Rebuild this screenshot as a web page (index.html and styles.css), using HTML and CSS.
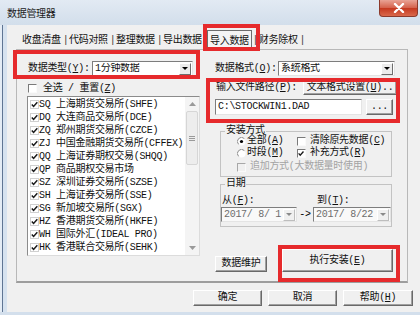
FILE: index.html
```html
<!DOCTYPE html>
<html lang="zh-CN">
<head>
<meta charset="utf-8">
<title>数据管理器</title>
<link rel="stylesheet" href="styles.css">
</head>
<body>
<div class="window">
  <div class="titlebar">
    <span class="title">数据管理器</span>
    <span class="close"><svg width="12" height="10" viewBox="0 0 12 10"><path d="M2 1 L10 9 M10 1 L2 9" stroke="#fff" stroke-width="2.4" stroke-linecap="round"/></svg></span>
  </div>
  <div class="frame-body">
    <div class="edge"></div>
    <div class="client">
      <div class="tabs">
        <span class="tab">收盘清盘</span><span class="sep">|</span>
        <span class="tab">代码对照</span><span class="sep">|</span>
        <span class="tab">整理数据</span><span class="sep">|</span>
        <span class="tab">导出数据</span><span class="sep">|</span>
        <span class="tab sel">导入数据</span><span class="sep">|</span>
        <span class="tab">财务除权</span><span class="sep">|</span>
      </div>
      <div class="page">
        <div class="col-left">
          <div class="row r-type">
            <span class="lbl lbl-type">数据类型(<u>Y</u>):</span>
            <div class="combo combo-type"><span class="val">1分钟数据</span><span class="drop"><i class="tri"></i></span></div>
          </div>
          <div class="row r-all">
            <span class="chk3d"></span><span class="all-text">全选 / 重置(<u>Z</u>)</span>
          </div>
          <div class="list">
            <div class="items">
              <div class="item"><svg class="tick" viewBox="0 0 9 9"><rect x="0.5" y="0.5" width="8" height="8" fill="#fff" stroke="#d0d0d0"/><path d="M1.8 4.4 L3.6 6.4 L7.3 2.2" fill="none" stroke="#1a1a1a" stroke-width="1.5"/></svg><span class="txt">SQ 上海期货交易所(SHFE)</span></div>
              <div class="item"><svg class="tick" viewBox="0 0 9 9"><rect x="0.5" y="0.5" width="8" height="8" fill="#fff" stroke="#d0d0d0"/><path d="M1.8 4.4 L3.6 6.4 L7.3 2.2" fill="none" stroke="#1a1a1a" stroke-width="1.5"/></svg><span class="txt">DQ 大连商品交易所(DCE)</span></div>
              <div class="item"><svg class="tick" viewBox="0 0 9 9"><rect x="0.5" y="0.5" width="8" height="8" fill="#fff" stroke="#d0d0d0"/><path d="M1.8 4.4 L3.6 6.4 L7.3 2.2" fill="none" stroke="#1a1a1a" stroke-width="1.5"/></svg><span class="txt">ZQ 郑州期货交易所(CZCE)</span></div>
              <div class="item"><svg class="tick" viewBox="0 0 9 9"><rect x="0.5" y="0.5" width="8" height="8" fill="#fff" stroke="#d0d0d0"/><path d="M1.8 4.4 L3.6 6.4 L7.3 2.2" fill="none" stroke="#1a1a1a" stroke-width="1.5"/></svg><span class="txt">ZJ 中国金融期货交易所(CFFEX)</span></div>
              <div class="item"><svg class="tick" viewBox="0 0 9 9"><rect x="0.5" y="0.5" width="8" height="8" fill="#fff" stroke="#d0d0d0"/><path d="M1.8 4.4 L3.6 6.4 L7.3 2.2" fill="none" stroke="#1a1a1a" stroke-width="1.5"/></svg><span class="txt">QQ 上海证券期权交易(SHQQ)</span></div>
              <div class="item"><svg class="tick" viewBox="0 0 9 9"><rect x="0.5" y="0.5" width="8" height="8" fill="#fff" stroke="#d0d0d0"/><path d="M1.8 4.4 L3.6 6.4 L7.3 2.2" fill="none" stroke="#1a1a1a" stroke-width="1.5"/></svg><span class="txt">QP 商品期权交易市场</span></div>
              <div class="item"><svg class="tick" viewBox="0 0 9 9"><rect x="0.5" y="0.5" width="8" height="8" fill="#fff" stroke="#d0d0d0"/><path d="M1.8 4.4 L3.6 6.4 L7.3 2.2" fill="none" stroke="#1a1a1a" stroke-width="1.5"/></svg><span class="txt">SZ 深圳证券交易所(SZSE)</span></div>
              <div class="item"><svg class="tick" viewBox="0 0 9 9"><rect x="0.5" y="0.5" width="8" height="8" fill="#fff" stroke="#d0d0d0"/><path d="M1.8 4.4 L3.6 6.4 L7.3 2.2" fill="none" stroke="#1a1a1a" stroke-width="1.5"/></svg><span class="txt">SH 上海证券交易所(SSE)</span></div>
              <div class="item"><svg class="tick" viewBox="0 0 9 9"><rect x="0.5" y="0.5" width="8" height="8" fill="#fff" stroke="#d0d0d0"/><path d="M1.8 4.4 L3.6 6.4 L7.3 2.2" fill="none" stroke="#1a1a1a" stroke-width="1.5"/></svg><span class="txt">SG 新加坡交易所(SGX)</span></div>
              <div class="item"><svg class="tick" viewBox="0 0 9 9"><rect x="0.5" y="0.5" width="8" height="8" fill="#fff" stroke="#d0d0d0"/><path d="M1.8 4.4 L3.6 6.4 L7.3 2.2" fill="none" stroke="#1a1a1a" stroke-width="1.5"/></svg><span class="txt">HZ 香港期货交易所(HKFE)</span></div>
              <div class="item"><svg class="tick" viewBox="0 0 9 9"><rect x="0.5" y="0.5" width="8" height="8" fill="#fff" stroke="#d0d0d0"/><path d="M1.8 4.4 L3.6 6.4 L7.3 2.2" fill="none" stroke="#1a1a1a" stroke-width="1.5"/></svg><span class="txt">WH 国际外汇(IDEAL PRO)</span></div>
              <div class="item"><svg class="tick" viewBox="0 0 9 9"><rect x="0.5" y="0.5" width="8" height="8" fill="#fff" stroke="#d0d0d0"/><path d="M1.8 4.4 L3.6 6.4 L7.3 2.2" fill="none" stroke="#1a1a1a" stroke-width="1.5"/></svg><span class="txt">HK 香港联合交易所(SEHK)</span></div>
            </div>
            <div class="vscroll">
              <div class="sb-btn"><svg width="7" height="4" viewBox="0 0 7 4"><path d="M0 4 L3.5 0 L7 4Z" fill="#9a9a9a"/></svg></div>
              <div class="sb-thumb"><svg width="6" height="5" viewBox="0 0 6 5"><path d="M0 0.5H6M0 2.5H6M0 4.5H6" stroke="#9a9a9a"/></svg></div>
              <div class="sb-track"></div>
              <div class="sb-btn"><svg width="7" height="4" viewBox="0 0 7 4"><path d="M0 0 L3.5 4 L7 0Z" fill="#9a9a9a"/></svg></div>
            </div>
          </div>
        </div>
        <div class="col-right">
          <div class="row r-fmt">
            <span class="lbl lbl-fmt">数据格式(<u>O</u>):</span>
            <div class="combo combo-fmt"><span class="val">系统格式</span><span class="drop"><i class="tri"></i></span></div>
          </div>
          <div class="row r-path">
            <span class="lbl">输入文件路径(<u>P</u>):</span>
            <span class="btn3d btn-txtfmt">文本格式设置(<u>U</u>)..</span>
          </div>
          <div class="row r-file">
            <span class="field">C:\STOCKWIN1.DAD</span>
            <span class="btn3d btn-dots">...</span>
          </div>
          <fieldset class="group g-install">
            <legend>安装方式</legend>
            <div class="grow">
              <span class="opt opt-a"><svg class="radio" viewBox="0 0 10 10"><circle cx="5" cy="5" r="4.5" fill="#fff"/><path d="M1.8 8.2 A4.5 4.5 0 0 1 8.2 1.8" fill="none" stroke="#808080" stroke-width="1"/><circle cx="5" cy="5" r="1.8" fill="#000"/></svg>全部(<u>A</u>)</span>
              <span class="opt"><span class="chk3d"></span>清除原先数据(<u>C</u>)</span>
            </div>
            <div class="grow">
              <span class="opt opt-a"><svg class="radio" viewBox="0 0 10 10"><circle cx="5" cy="5" r="4.5" fill="#fff"/><path d="M1.8 8.2 A4.5 4.5 0 0 1 8.2 1.8" fill="none" stroke="#808080" stroke-width="1"/></svg>时段(<u>M</u>)</span>
              <span class="opt"><span class="chk3d checked"><svg viewBox="0 0 9 9"><path d="M1.8 4.4 L3.6 6.4 L7.3 2.2" fill="none" stroke="#1a1a1a" stroke-width="1.5"/></svg></span>补充方式(<u>R</u>)</span>
            </div>
            <div class="grow g-last">
              <span class="opt disabled"><span class="chk3d dis"></span>追加方式(大数据量时使用)</span>
            </div>
          </fieldset>
          <fieldset class="group g-date">
            <legend>日期</legend>
            <div class="date-lbls"><span class="dl1">从(<u>F</u>):</span><span class="dl2">到(<u>T</u>):</span></div>
            <div class="date-row">
              <div class="combo dis combo-d1"><span class="val">2017/ 8/ 1</span><span class="drop"><i class="tri"></i></span></div>
              <span class="arrow">-&gt;</span>
              <div class="combo dis combo-d2"><span class="val">2017/ 8/22</span><span class="drop"><i class="tri"></i></span></div>
            </div>
          </fieldset>
          <div class="row r-actions">
            <span class="btn3d btn-maint">数据维护</span>
            <span class="btn3d btn-exec">执行安装(<u>E</u>)</span>
          </div>
        </div>
      </div>
      <div class="footer">
        <span class="btn3d fbtn">确定</span>
        <span class="btn3d fbtn">取消</span>
        <span class="btn3d fbtn">帮助(<u>H</u>)</span>
      </div>
    </div>
  </div>
  <div class="ann ann-tab"></div>
  <div class="ann ann-type"></div>
  <div class="ann ann-path"></div>
  <div class="ann ann-exec"></div>
</div>
</body>
</html>
```
FILE: styles.css
```css
html, body {
  margin: 0;
  padding: 0;
}
body {
  font-family: "Liberation Mono", "Noto Sans CJK SC", monospace;
  font-size: 10px;
  line-height: 12px;
  letter-spacing: -0.3px;
  color: #111;
  background: #fff;
}
u { text-decoration: underline; text-underline-offset: 1px; }

.window {
  position: relative;
  width: 420px;
  height: 315px;
  display: flex;
  flex-direction: column;
  background: #d3dfec;
  overflow: hidden;
}
.titlebar {
  height: 25px;
  display: flex;
  align-items: flex-start;
  background: linear-gradient(#e2eaf3, #d2deeb);
  flex: none;
}
.title {
  padding: 7px 0 0 7px;
  font-family: "Noto Sans CJK SC", sans-serif;
  color: #1b1b1b;
}
.close {
  margin-left: auto;
  margin-right: 2px;
  width: 39px;
  height: 17px;
  box-sizing: border-box;
  border: 1px solid #8c3a2c;
  border-top: none;
  border-radius: 0 0 4px 4px;
  background: linear-gradient(#e9a395, #d4604a 50%, #c5381f 51%, #d9694c);
  display: flex;
  align-items: center;
  justify-content: center;
}
.frame-body {
  flex: 1;
  display: flex;
  padding-bottom: 3px;
}
.edge {
  width: 7px;
  flex: none;
  background: linear-gradient(to right, #e4ecf5 0 2px, #5f7593 2px 3px, #d6e2ef 3px);
}
.client {
  flex: 1;
  background: #f0f0f0;
  display: flex;
  flex-direction: column;
}

/* tabs */
.tabs {
  height: 24px;
  display: flex;
  align-items: flex-end;
  padding-left: 15px;
  flex: none;
}
.tab {
  width: 40px;
  padding-bottom: 2px;
  white-space: nowrap;
}
.sep {
  width: 7px;
  text-align: center;
  padding-bottom: 2px;
  color: #3a3a3a;
}
.tab.sel {
  width: auto;
  margin-left: -3px;
  padding: 5px 2px 1px 2px;
  border: 1px solid #6d6d6d;
  border-bottom: none;
  background: #f4f4f4;
}

/* page */
.page {
  margin-left: 9px;
  width: 392px;
  height: 234px;
  box-sizing: border-box;
  border: 1px solid #b8b8b8;
  border-bottom: 2px solid #9d9d9d;
  display: grid;
  grid-template-columns: 188px 1fr;
  flex: none;
}
.row {
  display: flex;
  align-items: center;
}
.r-type {
  margin-top: 11px;
  height: 15px;
  padding-left: 11px;
}
.lbl-type { width: 64px; white-space: nowrap; }
.combo {
  display: flex;
  box-sizing: border-box;
  height: 15px;
  background: #fff;
  border-top: 1px solid #7d7d7d;
  border-left: 1px solid #7d7d7d;
  border-right: 1px solid #e4e4e4;
  border-bottom: 1px solid #e4e4e4;
  align-items: center;
}
.combo .val {
  flex: 1;
  padding-left: 2px;
  white-space: nowrap;
  overflow: hidden;
}
.combo .drop {
  width: 12px;
  height: 12px;
  margin-right: 1px;
  box-sizing: border-box;
  border-top: 1px solid #fff;
  border-left: 1px solid #fff;
  border-right: 1px solid #6e6e6e;
  border-bottom: 1px solid #6e6e6e;
  background: #ececec;
  display: flex;
  align-items: center;
  justify-content: center;
}
.tri {
  width: 0;
  height: 0;
  border-left: 3px solid transparent;
  border-right: 3px solid transparent;
  border-top: 3px solid #000;
}
.combo-type { width: 101px; }
.r-all {
  margin-top: 7px;
  height: 13px;
  padding-left: 11px;
  align-items: flex-start;
}
.chk3d {
  display: inline-flex;
  width: 9px;
  height: 9px;
  box-sizing: border-box;
  border-top: 1px solid #7a7a7a;
  border-left: 1px solid #7a7a7a;
  border-right: 1px solid #fafafa;
  border-bottom: 1px solid #fafafa;
  background: #fff;
  flex: none;
}
.chk3d svg { width: 9px; height: 9px; margin: -1px 0 0 -1px; }
.r-all .chk3d { margin-top: 1px; }
.all-text { margin-left: 6px; }

/* list */
.list {
  margin-left: 10px;
  width: 173px;
  height: 160px;
  box-sizing: border-box;
  border-top: 1px solid #8b8b8b;
  border-left: 1px solid #8b8b8b;
  border-right: 1px solid #dcdcdc;
  border-bottom: 1px solid #dcdcdc;
  background: #fff;
  display: flex;
}
.items {
  flex: 1;
  padding-top: 1px;
  overflow: hidden;
}
.item {
  height: 13px;
  display: flex;
  align-items: center;
  padding-left: 2px;
  white-space: pre;
}
.tick { width: 9px; height: 9px; flex: none; }
.vscroll {
  width: 14px;
  display: flex;
  flex-direction: column;
  background: #f4f4f4;
}
.sb-btn {
  height: 14px;
  display: flex;
  align-items: center;
  justify-content: center;
}
.sb-thumb {
  height: 54px;
  margin: 0 1px;
  box-sizing: border-box;
  border: 1px solid #d6d6d6;
  border-radius: 2px;
  background: #ededed;
  display: flex;
  align-items: center;
  justify-content: center;
}
.sb-track { flex: 1; }

/* right column */
.r-fmt {
  margin-top: 11px;
  height: 15px;
  padding-left: 10px;
}
.lbl-fmt { width: 63px; white-space: nowrap; }
.combo-fmt { width: 117px; }
.r-path {
  margin-top: 4px;
  height: 15px;
  padding-left: 11px;
  padding-right: 10px;
}
.btn3d {
  display: inline-flex;
  align-items: center;
  justify-content: center;
  box-sizing: border-box;
  background: #f0f0f0;
  border-top: 1px solid #fff;
  border-left: 1px solid #fff;
  border-right: 1px solid #696969;
  border-bottom: 1px solid #696969;
  box-shadow: inset -1px -1px 0 #a0a0a0;
  white-space: nowrap;
}
.btn-txtfmt {
  margin-left: auto;
  width: 94px;
  height: 15px;
}
.r-file {
  margin-top: 4px;
  height: 16px;
  padding-left: 10px;
}
.field {
  width: 147px;
  height: 16px;
  box-sizing: border-box;
  background: #fff;
  border-top: 1px solid #7d7d7d;
  border-left: 1px solid #7d7d7d;
  border-right: 1px solid #e4e4e4;
  border-bottom: 1px solid #e4e4e4;
  padding-left: 2px;
  display: flex;
  align-items: center;
}
.btn-dots {
  margin-left: 4px;
  width: 27px;
  height: 16px;
}

.group {
  margin: 0 15px;
  padding: 0 0 3px 16px;
  border: 1px solid #c3c3c3;
  min-width: 0;
}
.group legend {
  padding: 0 1px;
  margin-left: 4px;
  line-height: 10px;
}
.g-install legend { margin-left: -12px; }
.g-install { margin-top: 11px; }
.grow {
  height: 12px;
  display: flex;
  align-items: center;
}
.grow:first-of-type { margin-top: -1px; }
.g-last { margin-top: 2px; }
.opt {
  display: inline-flex;
  align-items: center;
  white-space: nowrap;
}
.opt-a { width: 60px; }
.radio { width: 9px; height: 9px; margin-right: 1px; flex: none; }
.opt .chk3d { margin-right: 4px; }
.opt.disabled { color: #a3a3a3; }
.chk3d.dis {
  border-top-color: #a8a8a8;
  border-left-color: #a8a8a8;
  background: transparent;
}
.g-date {
  margin-top: 2px;
  padding: 0 0 4px 0;
}
.date-lbls {
  margin-top: 6px;
  height: 12px;
  display: flex;
  padding-left: 1px;
}
.dl1 { width: 95px; }
.date-row {
  display: flex;
  align-items: center;
  height: 15px;
}
.combo.dis {
  background: #f9f9f9;
  color: #6d6d6d;
}
.combo.dis .drop { background: #f0f0f0; border-color: #fff #bdbdbd #bdbdbd #fff; }
.combo.dis .tri { border-top-color: #8a8a8a; }
.combo-d1 { width: 76px; }
.combo-d2 { width: 78px; }
.arrow { width: 16px; text-align: center; color: #000; }

.r-actions {
  margin-top: 22px;
  padding-left: 10px;
  align-items: flex-end;
  height: 23px;
}
.btn-maint { width: 52px; height: 16px; }
.btn-exec { margin-left: 15px; width: 111px; height: 23px; }

.footer {
  margin-top: 7px;
  padding-left: 186px;
  display: flex;
  gap: 6px;
}
.fbtn {
  width: 69px;
  height: 16px;
}
.fbtn:last-child { width: 70px; }

/* red annotation boxes */
.ann {
  position: absolute;
  box-sizing: border-box;
  border: 4px solid #e62a2c;
}
.ann-tab { left: 203px; top: 24px; width: 57px; height: 27px; }
.ann-type { left: 13px; top: 50px; width: 187px; height: 29px; }
.ann-path { left: 206px; top: 78px; width: 194px; height: 45px; }
.ann-exec { left: 278px; top: 245px; width: 122px; height: 37px; }
```
